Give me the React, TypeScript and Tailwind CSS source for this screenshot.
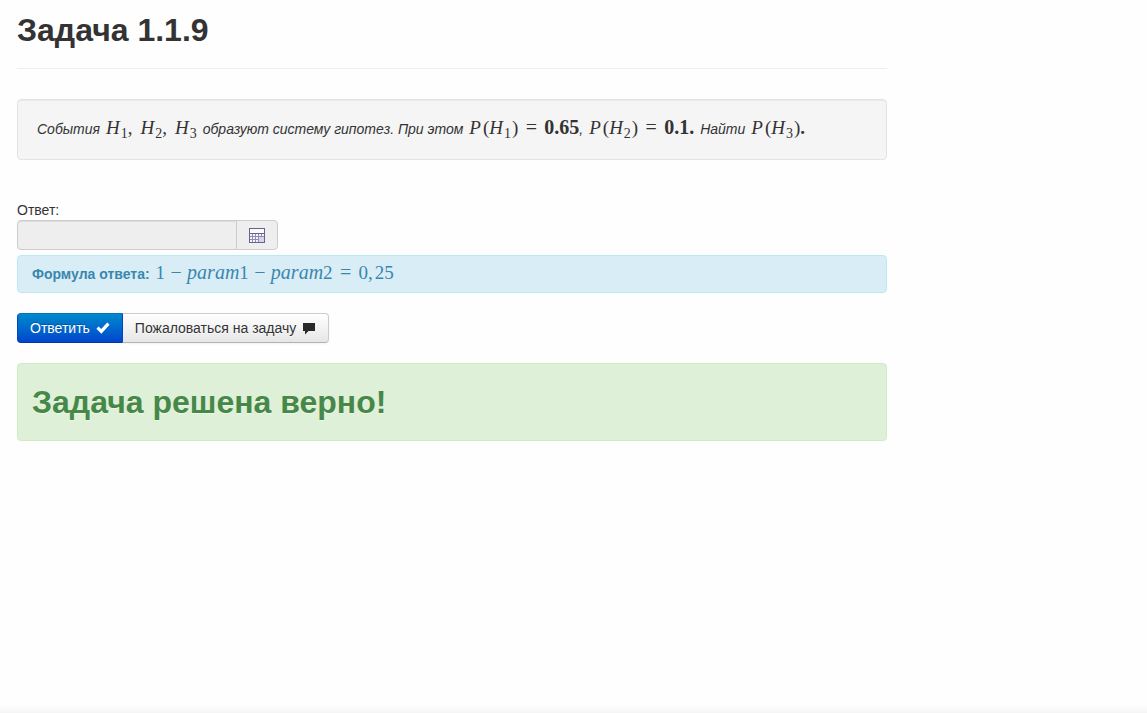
import type { ReactNode } from "react";

function MathRow({ children }: { children: ReactNode }) {
  return (
    <span className="inline-flex items-baseline font-['Liberation_Serif',serif] text-[19px] leading-4 not-italic whitespace-nowrap">
      {children}
    </span>
  );
}

function Hypothesis({ index }: { index: number }) {
  return (
    <>
      <i>H</i>
      <sub className="ml-px text-[14px]">{index}</sub>
    </>
  );
}

function Probability({ index }: { index: number }) {
  return (
    <>
      <i className="mr-0.5">P</i>
      <span>(</span>
      <Hypothesis index={index} />
      <span className="ml-px">)</span>
    </>
  );
}

function Equals() {
  return <span className="mx-[7px] w-3 text-center text-[20px]">=</span>;
}

function Minus() {
  return <span className="mx-[5px] w-3 text-center text-[20px]">−</span>;
}

function CalculatorIcon() {
  return (
    <svg width="16" height="16" viewBox="0 0 16 16" aria-hidden="true" shapeRendering="crispEdges">
      <rect x="0" y="1" width="16" height="15" fill="#8f8db4" />
      <rect x="1" y="2" width="14" height="4" fill="#fafafc" />
      <g fill="#f3f3f9">
        {[7, 10, 13].map((y) =>
          [1, 4, 7, 10, 13].map((x) => <rect key={`${x}-${y}`} x={x} y={y} width="2" height="2" />)
        )}
      </g>
      <path d="M0 1h16v1H0zM0 1h1v15H0zM0 6h16v1H0zM15 1h1v15h-1zM0 15h16v1H0z" fill="#66638f" />
      <rect x="10" y="10" width="5" height="5" fill="#d5d4e8" />
    </svg>
  );
}

function OkIcon() {
  return (
    <svg width="14" height="14" viewBox="0 0 14 14" aria-hidden="true">
      <path d="M.4 7.8 2.6 5.6 5.2 8.1 11.2 1.6 13.6 3.8 5.4 12.7Z" fill="#fff" />
    </svg>
  );
}

function CommentIcon() {
  return (
    <svg width="14" height="14" viewBox="0 0 14 14" aria-hidden="true">
      <path d="M1 2h12v8H6.5L3 13.5V10H1Z" fill="#292929" />
    </svg>
  );
}

export default function App() {
  return (
    <div className="flex min-h-screen flex-col bg-[#fefefe] font-['Liberation_Sans',Arial,sans-serif] text-sm leading-5 text-[#333]">
      <main className="w-full max-w-[904px] grow px-[17px] pt-2.5">
        <header className="mb-[30px] border-b border-[#eee] pb-[18px]">
          <h1 className="text-[32px] leading-10 font-bold">Задача 1.1.9</h1>
        </header>

        <section className="mb-10 rounded border border-[#e3e3e3] bg-[#f5f5f5] p-[19px] shadow-[inset_0_1px_1px_rgba(0,0,0,0.05)]">
          <p className="flex flex-wrap items-baseline gap-x-1.5 leading-[21px] italic">
            <span>События</span>
            <MathRow>
              <Hypothesis index={1} />
              <span className="mr-2">,</span>
              <Hypothesis index={2} />
              <span className="mr-2">,</span>
              <Hypothesis index={3} />
            </MathRow>
            <span>образуют систему гипотез. При этом</span>
            <span className="flex items-baseline">
              <MathRow>
                <Probability index={1} />
                <Equals />
                <b className="text-[20px]">0.65</b>
              </MathRow>
              ,
            </span>
            <MathRow>
              <Probability index={2} />
              <Equals />
              <b className="text-[20px]">0.1.</b>
            </MathRow>
            <span>Найти</span>
            <MathRow>
              <Probability index={3} />
              <b>.</b>
            </MathRow>
          </p>
        </section>

        <form onSubmit={(event) => event.preventDefault()}>
          <label htmlFor="answer" className="block">
            Ответ:
          </label>
          <div className="mb-[5px] flex">
            <input
              id="answer"
              type="text"
              readOnly
              className="h-[30px] w-[220px] min-w-0 rounded-l border border-[#ccc] bg-[#eee] px-1.5 shadow-[inset_0_1px_1px_rgba(0,0,0,0.075)] outline-none"
            />
            <button
              type="button"
              aria-label="Калькулятор"
              className="-ml-px flex h-[30px] w-[42px] items-center justify-center rounded-r border border-[#ccc] bg-[#eee]"
            >
              <CalculatorIcon />
            </button>
          </div>

          <div className="mb-5 flex flex-wrap items-baseline gap-x-1.5 rounded border border-[#bce8f1] bg-[#d9edf7] px-3.5 py-2 text-[#3a87ad]">
            <strong>Формула ответа:</strong>
            <MathRow>
              <span>1</span>
              <Minus />
              <i className="text-[20px]">param</i>
              <span>1</span>
              <Minus />
              <i className="text-[20px]">param</i>
              <span>2</span>
              <Equals />
              <span>0,</span>
              <span className="ml-0.5">25</span>
            </MathRow>
          </div>

          <div className="mb-5 flex">
            <button
              type="submit"
              className="flex h-[30px] items-center gap-1.5 rounded-l border border-[#0044cc] border-t-[#0074bb] border-b-[#0038a8] bg-linear-to-b from-[#0088cc] to-[#0044cc] px-3 text-white [text-shadow:0_-1px_0_rgba(0,0,0,0.25)]"
            >
              Ответить
              <OkIcon />
            </button>
            <button
              type="button"
              className="flex h-[30px] items-center gap-1.5 rounded-r border border-l-0 border-[#ccc] border-b-[#b3b3b3] bg-linear-to-b from-white to-[#e6e6e6] px-3 text-[#333] shadow-[inset_0_1px_0_rgba(255,255,255,0.2),0_1px_2px_rgba(0,0,0,0.05)] [text-shadow:0_1px_1px_rgba(255,255,255,0.75)]"
            >
              Пожаловаться на задачу
              <CommentIcon />
            </button>
          </div>
        </form>

        <section className="rounded border border-[#d0e9c6] bg-[#dff0d8] px-3.5 py-[18px] text-[#468847]">
          <h2 className="text-[32px] leading-10 font-bold [text-shadow:0_1px_0_rgba(255,255,255,0.5)]">
            Задача решена верно!
          </h2>
        </section>
      </main>
      <div className="h-2 bg-linear-to-b from-[#fefefe] to-[#f5f5f5]" />
    </div>
  );
}
